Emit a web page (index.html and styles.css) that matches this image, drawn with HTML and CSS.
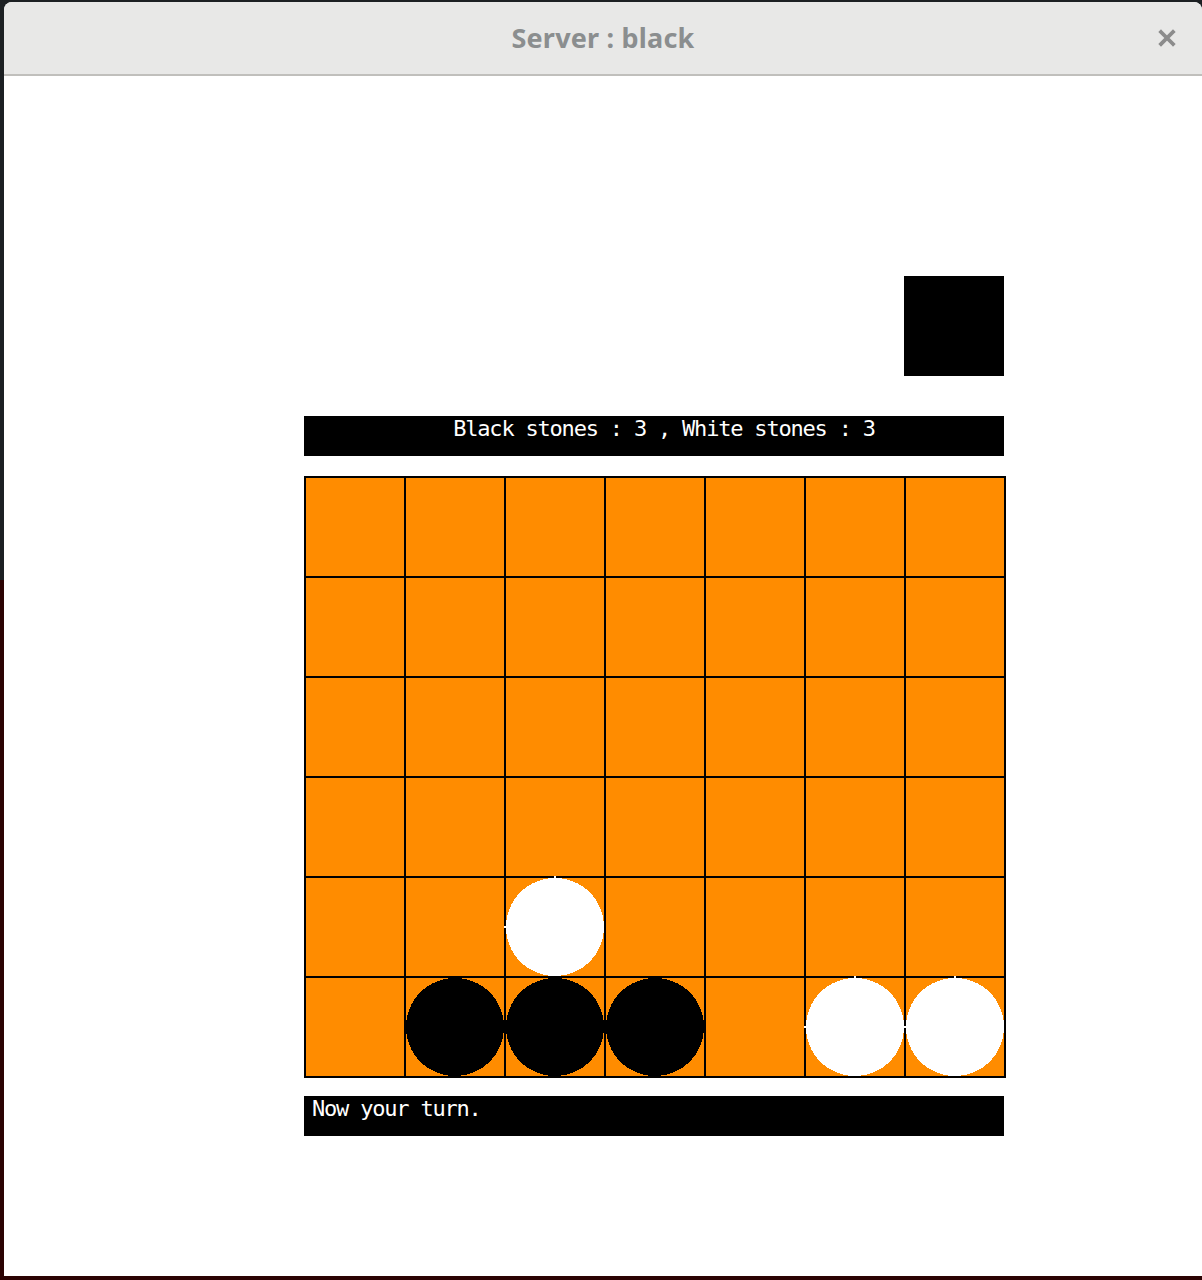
FILE: index.html
```html
<!DOCTYPE html>
<html>
<head>
<meta charset="utf-8">
<title>Server : black</title>
<link rel="stylesheet" href="styles.css">
</head>
<body>
<div class="window">
  <header class="titlebar">
    <span class="title">Server : black</span>
    <button class="close" aria-label="Close">
      <svg width="18" height="18" viewBox="0 0 18 18"><path d="M3 3 L15 15 M15 3 L3 15" stroke="#8c8c8c" stroke-width="3.8" stroke-linecap="square"/></svg>
    </button>
  </header>
  <main class="content">
    <div class="panel">
      <div class="indicator"></div>
      <div class="status">Black stones : 3 , White stones : 3</div>
      <svg class="board" width="702" height="602" viewBox="0 0 702 602" shape-rendering="crispEdges">
        <rect x="0" y="0" width="702" height="602" fill="#ff8c00"/>
        <g fill="#000">
          <rect x="0" y="0" width="2" height="602"/>
          <rect x="100" y="0" width="2" height="602"/>
          <rect x="200" y="0" width="2" height="602"/>
          <rect x="300" y="0" width="2" height="602"/>
          <rect x="400" y="0" width="2" height="602"/>
          <rect x="500" y="0" width="2" height="602"/>
          <rect x="600" y="0" width="2" height="602"/>
          <rect x="700" y="0" width="2" height="602"/>
          <rect x="0" y="0" width="702" height="2"/>
          <rect x="0" y="100" width="702" height="2"/>
          <rect x="0" y="200" width="702" height="2"/>
          <rect x="0" y="300" width="702" height="2"/>
          <rect x="0" y="400" width="702" height="2"/>
          <rect x="0" y="500" width="702" height="2"/>
          <rect x="0" y="600" width="702" height="2"/>
        </g>
        <g class="stone white">
          <circle cx="251" cy="451" r="49" fill="#fff"/>
          <rect x="250" y="400" width="2" height="2" fill="#fff"/>
          <rect x="200" y="450" width="2" height="2" fill="#fff"/>
        </g>
        <g class="stone black">
          <circle cx="151" cy="551" r="49" fill="#000"/>
          <circle cx="251" cy="551" r="49" fill="#000"/>
          <circle cx="351" cy="551" r="49" fill="#000"/>
        </g>
        <g class="stone white">
          <circle cx="551" cy="551" r="49" fill="#fff"/>
          <rect x="550" y="500" width="2" height="2" fill="#fff"/>
          <rect x="500" y="550" width="2" height="2" fill="#fff"/>
          <circle cx="651" cy="551" r="49" fill="#fff"/>
          <rect x="650" y="500" width="2" height="2" fill="#fff"/>
          <rect x="600" y="550" width="2" height="2" fill="#fff"/>
        </g>
      </svg>
      <div class="message">Now your turn.</div>
    </div>
  </main>
</div>
</body>
</html>
```

FILE: styles.css
```css
html, body {
  margin: 0;
  padding: 0;
}

body {
  width: 1202px;
  height: 1280px;
  overflow: hidden;
  background: linear-gradient(to bottom, #1c2023 0, #1c2023 580px, #2b0303 580px, #2b0303 100%);
}

.window {
  margin: 2px 0 0 4px;
  width: 1198px;
  height: 1274px;
  background: #ffffff;
  border-radius: 8px 8px 0 0;
  overflow: hidden;
  display: flex;
  flex-direction: column;
}

.titlebar {
  position: relative;
  height: 74px;
  flex: 0 0 74px;
  box-sizing: border-box;
  padding-bottom: 2px;
  background: #e8e8e7;
  border-bottom: 2px solid #c0bfbc;
  display: flex;
  align-items: center;
  justify-content: center;
}

.title {
  font-family: "Noto Sans", "Open Sans", sans-serif;
  font-weight: 700;
  font-size: 27px;
  color: #8b8e8f;
  letter-spacing: 0.2px;
}

.close {
  position: absolute;
  right: 26px;
  top: 27px;
  width: 18px;
  height: 18px;
  padding: 0;
  border: 0;
  background: transparent;
  display: flex;
}

.content {
  flex: 1;
  padding: 200px 0 0 300px;
}

.panel {
  width: 700px;
  display: flex;
  flex-direction: column;
}

.indicator {
  align-self: flex-end;
  width: 100px;
  height: 100px;
  background: #000;
}

.status,
.message {
  height: 40px;
  box-sizing: border-box;
  background: #000;
  color: #fff;
  font-family: "DejaVu Sans Mono", "Liberation Mono", monospace;
  font-size: 22px;
  letter-spacing: -1.2px;
  line-height: 22px;
  white-space: pre;
}

.status {
  margin-top: 40px;
  padding: 2px 0 0 20px;
  text-align: center;
}

.board {
  display: block;
  margin-top: 20px;
}

.message {
  margin-top: 18px;
  padding: 2px 0 0 8px;
}
```
